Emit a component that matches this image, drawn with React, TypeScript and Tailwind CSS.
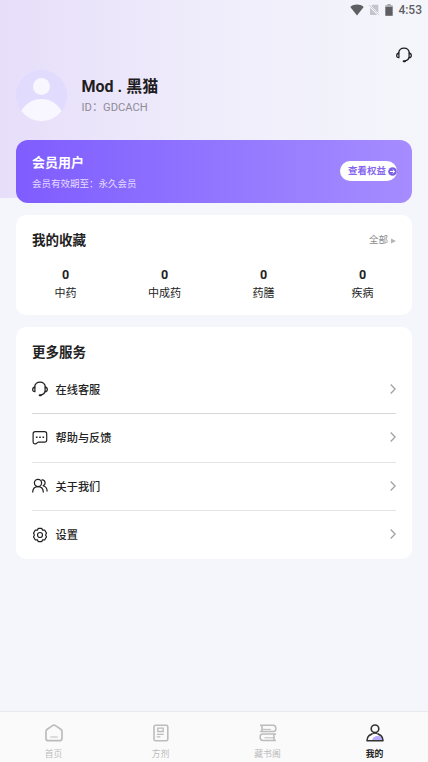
import type { ReactNode } from "react";

type IconProps = { className?: string };

function HeadsetIcon({ className }: IconProps) {
  return (
    <svg viewBox="0 0 16 16" className={className} fill="none" stroke="currentColor" strokeWidth="1.25" strokeLinecap="round">
      <path d="M2.6 6.2C3 3 5.2 1.2 8 1.2s5 1.8 5.4 5" />
      <path d="M2.9 6.2v4.5C1.5 10.7.7 9.8.7 8.5s.8-2.3 2.2-2.3ZM13.1 6.2v4.5c1.4 0 2.2-.9 2.2-2.2s-.8-2.3-2.2-2.3Z" />
      <path d="M13 10.7c-.5 1.8-1.8 2.9-3.8 3.2" />
      <path d="M7.7 14.2h1.2" strokeWidth="2" />
    </svg>
  );
}

function ChatIcon({ className }: IconProps) {
  return (
    <svg viewBox="0 0 16 16" className={className} fill="none" stroke="currentColor" strokeWidth="1.2" strokeLinejoin="round">
      <path d="M3.2 1.7h9.4c1.4 0 2.1.8 2.1 2.1v6.2c0 1.4-.7 2.1-2.1 2.1H6.2L4 13.8c-1.9.3-2.9-.4-2.9-2V3.8c0-1.3.7-2.1 2.1-2.1Z" />
      <path d="M3.9 7.2h1.6M7.2 7.2h1.6M10.5 7.2h1.6" strokeWidth="1.6" />
    </svg>
  );
}

function PeopleIcon({ className }: IconProps) {
  return (
    <svg viewBox="0 0 16 16" className={className} fill="none" stroke="currentColor" strokeWidth="1.25" strokeLinecap="round">
      <circle cx="6" cy="5" r="3.6" />
      <path d="M.7 14c.1-3.3 2.2-5.4 5.3-5.4s5.2 2.1 5.3 5.4" />
      <path d="M9.8 2c2.2-.2 3.3 1.1 3.3 2.9 0 1.3-.7 2.3-1.9 2.7M11.5 8c2.3.7 3.5 2.4 3.6 5" />
    </svg>
  );
}

function GearIcon({ className }: IconProps) {
  return (
    <svg viewBox="0 0 16 16" className={className} fill="none" stroke="currentColor" strokeWidth="1.2" strokeLinejoin="round">
      <path d="M6.3 1.4h3.4l.9 1.7 2.2.1 1.7 2.9-.9 1.9.9 1.9-1.7 2.9-2.2.1-.9 1.7H6.3l-.9-1.7-2.2-.1-1.7-2.9.9-1.9-.9-1.9 1.7-2.9 2.2-.1Z" />
      <circle cx="8" cy="8" r="2.5" />
    </svg>
  );
}

function HomeIcon({ className }: IconProps) {
  return (
    <svg viewBox="0 0 18 18" className={className} fill="none" stroke="currentColor" strokeWidth="1.7" strokeLinecap="round" strokeLinejoin="round">
      <path d="M7.5 1.6 2.2 5.3C1.4 5.9 1 6.6 1 7.5v6.7c0 1.7.9 2.5 2.5 2.5h11c1.6 0 2.5-.8 2.5-2.5V7.5c0-.9-.4-1.6-1.2-2.2l-5.3-3.7c-1-.7-2-.7-3 0Z" />
      <path d="M5.8 13h6.4" strokeWidth="1.2" />
    </svg>
  );
}

function RecipeIcon({ className }: IconProps) {
  return (
    <svg viewBox="0 0 18 18" className={className} fill="none" stroke="currentColor" strokeWidth="1.6">
      <rect x="2" y="1.2" width="13.8" height="15.6" rx="1.5" />
      <path d="M5.8 4.2h5.4v3.3H5.8ZM4.8 10.3h7M4.8 12.8h3.6" strokeWidth="1.3" />
    </svg>
  );
}

function BooksIcon({ className }: IconProps) {
  return (
    <svg viewBox="0 0 18 18" className={className} fill="none" stroke="currentColor" strokeWidth="1.5" strokeLinejoin="round">
      <path d="M1 1.3h13.2c1.8 0 2.7 1.2 2.7 3.1s-.9 3.1-2.7 3.1H1M3 1.5v5.8" />
      <path d="M17 9.9H3.8c-1.8 0-2.7 1.3-2.7 3.2s.9 3.5 2.7 3.5H17M15 10v6.4" />
      <path d="M3 5.4h9M5.500 13.800H15" strokeWidth="1" />
    </svg>
  );
}

function MineIcon({ className }: IconProps) {
  return (
    <svg viewBox="0 0 18 18" className={className} fill="none" stroke="#343434" strokeWidth="1.6" strokeLinejoin="round">
      <path d="M6 16.500c.3-2.700 3-4.500 6-4.500 2.200 0 4 .8 5 2.600v1.900Z" fill="#b5a8ff" stroke="none" />
      <circle cx="9" cy="4.8" r="3.8" />
      <path d="M6.300 9.800 2.800 11.800C1.500 12.800 1 14.500 1 16.700h16c0-2.200-.5-3.900-1.800-4.900l-3.500-2" />
      <path d="M6.300 9.800c1.700-.7 3.700-.7 5.400 0" strokeWidth="1.1" />
    </svg>
  );
}

function StatusBar() {
  return (
    <div className="flex h-[19px] items-center justify-end pr-[6px] text-[#5f5f63]">
      <svg viewBox="0 0 14 12" className="h-[12px] w-[14px]" fill="currentColor">
        <path d="M7 11.5.3 3C4-.2 10-.2 13.7 3Z" />
      </svg>
      <svg viewBox="0 0 12 12" className="ml-[4px] h-[12px] w-[12px]">
        <path d="M4.200.8h6.100v8.200L3.300 2ZM2 3.800l7.200 7.200H2Z" fill="#c5c4cc" />
        <path d="m1 1 10.200 10.200" stroke="#c5c4cc" strokeWidth=".8" />
      </svg>
      <svg viewBox="0 0 8 12" className="ml-[5px] h-[12px] w-[8px]">
        <path d="M2.300.1h3.400v1.200h2v2H.3v-2h2Z" fill="#aaa9b0" />
        <path d="M.3 3h7.4v8.8H.3Z" fill="currentColor" />
      </svg>
      <span className="ml-[5px] pt-px text-[12px] leading-[18px] font-medium">4:53</span>
    </div>
  );
}

function Profile() {
  return (
    <div className="mt-[7px] flex h-[51px] px-[16px]">
      <svg viewBox="0 0 51 51" className="size-[51px]">
        <circle cx="25.5" cy="25.5" r="25.5" fill="#e1dbfe" />
        <circle cx="25.5" cy="16.5" r="8.5" fill="#f8f6fe" />
        <path d="M5.2 41C9.5 33.5 16.8 29 25.5 29s16 4.5 20.3 12a25.5 25.5 0 0 1-40.6 0Z" fill="#f8f6fe" />
      </svg>
      <div className="ml-[14.5px] pt-[6px]">
        <h1 className="text-[16px] leading-[22px] font-bold text-[#1f1d22]">Mod . 黑猫</h1>
        <p className="text-[11.2px] leading-[19px] text-[#8f8c96]">ID：GDCACH</p>
      </div>
    </div>
  );
}

function MemberCard() {
  return (
    <section className="mx-[16px] mt-[19px] flex h-[63px] items-center justify-between rounded-[12px] bg-linear-to-r from-[#7f5cff] to-[#a68cff] pr-[15px] pl-[16px] text-white">
      <div className="pt-[2px]">
        <h2 className="text-[13px] leading-[20px] font-bold">会员用户</h2>
        <p className="mt-[2px] text-[9.5px] leading-[18px] text-[#e4dcff]">会员有效期至：永久会员</p>
      </div>
      <button className="mb-px flex h-[20px] w-[57px] items-center rounded-full bg-white pl-[8px] text-[9.5px] font-bold whitespace-nowrap text-[#8767f0]">
        查看权益
        <svg viewBox="0 0 9 9" className="ml-[2px] size-[9px] shrink-0">
          <circle cx="4.5" cy="4.5" r="4.3" fill="#7d5fe6" />
          <path d="M2 4.5h4.5M4.7 2.6l2 1.900-2 1.900" fill="none" stroke="#fff" strokeWidth="1" />
        </svg>
      </button>
    </section>
  );
}

const favorites = ["中药", "中成药", "药膳", "疾病"];

function Favorites() {
  return (
    <section className="mx-[16px] mt-[12px] h-[100px] rounded-[10px] bg-white pt-[15px]">
      <div className="flex items-center justify-between px-[16px]">
        <h2 className="text-[13.5px] leading-[20px] font-bold text-[#222]">我的收藏</h2>
        <span className="flex items-center pt-px text-[9.5px] text-[#8c8c8c]">
          全部
          <svg viewBox="0 0 5 6" className="ml-[3px] h-[6px] w-[5px]">
            <path d="M0 .5 5 3 0 5.5Z" fill="#b5b5b5" />
          </svg>
        </span>
      </div>
      <div className="mt-[16px] grid grid-cols-4 text-center text-[#222]">
        {favorites.map((name) => (
          <div key={name}>
            <p className="text-[12.5px] leading-[18px] font-bold">0</p>
            <p className="mt-px text-[11px] leading-[18px]">{name}</p>
          </div>
        ))}
      </div>
    </section>
  );
}

const services: { label: string; icon: ReactNode }[] = [
  { label: "在线客服", icon: <HeadsetIcon className="size-[16px]" /> },
  { label: "帮助与反馈", icon: <ChatIcon className="size-[16px]" /> },
  { label: "关于我们", icon: <PeopleIcon className="size-[16px]" /> },
  { label: "设置", icon: <GearIcon className="size-[16px]" /> },
];

function Services() {
  return (
    <section className="mx-[16px] mt-[12px] h-[232px] rounded-[10px] bg-white px-[16px] pt-[15px]">
      <h2 className="text-[13.5px] leading-[20px] font-bold text-[#222]">更多服务</h2>
      <ul className="mt-[3px]">
        {services.map(({ label, icon }) => (
          <li
            key={label}
            className="flex h-[48.5px] items-center border-b border-[#e4e4e4] text-[#222] first:h-[49px] first:border-[#d8d8d8] last:h-[47.5px] last:border-0"
          >
            <span className="-ml-[0.5px]">{icon}</span>
            <span className="ml-[8px] pt-[3px] text-[11.2px] leading-[18px] font-medium">{label}</span>
            <svg viewBox="0 0 6 10" className="mb-px ml-auto h-[10px] w-[6px]" fill="none" stroke="#a0a0a0" strokeWidth="1.3">
              <path d="m.7.5 4.5 4.5L.7 9.5" />
            </svg>
          </li>
        ))}
      </ul>
    </section>
  );
}

const tabs: { label: string; icon: ReactNode; active?: boolean }[] = [
  { label: "首页", icon: <HomeIcon className="size-[18px]" /> },
  { label: "方剂", icon: <RecipeIcon className="size-[18px]" /> },
  { label: "藏书阁", icon: <BooksIcon className="size-[18px]" /> },
  { label: "我的", icon: <MineIcon className="size-[18px]" />, active: true },
];

function TabBar() {
  return (
    <nav className="mt-auto grid h-[51px] grid-cols-4 border-t border-[#e9e9eb] bg-[#fafafa]">
      {tabs.map(({ label, icon, active }) => (
        <div
          key={label}
          className={`flex flex-col items-center pt-[12px] text-[8.8px] leading-[14px] ${active ? "font-bold text-[#222]" : "text-[#bcbcbc]"}`}
        >
          {icon}
          <span className="mt-[5px]">{label}</span>
        </div>
      ))}
    </nav>
  );
}

export default function App() {
  return (
    <main className="flex h-[762px] w-[428px] flex-col overflow-hidden bg-[#f5f6fb] bg-linear-to-r from-[#e7defa] via-[#efedfb] to-[#f5f6fb] bg-[length:100%_198px] bg-no-repeat font-['Roboto','Noto_Sans_CJK_SC',sans-serif]">
      <StatusBar />
      <div className="mt-[28px] flex h-[16px] justify-end pr-[16px] text-[#1d1d1f]">
        <HeadsetIcon className="size-[16px]" />
      </div>
      <Profile />
      <MemberCard />
      <Favorites />
      <Services />
      <TabBar />
    </main>
  );
}
